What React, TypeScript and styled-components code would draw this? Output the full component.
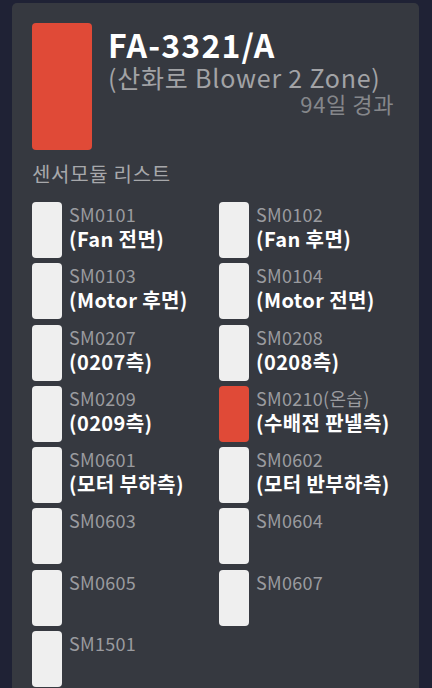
import React from "react";
import styled, { createGlobalStyle } from "styled-components";

const Global = createGlobalStyle`
  html, body {
    margin: 0;
    padding: 0;
    background: #1f2235;
    font-family: "Noto Sans CJK KR", "Noto Sans", sans-serif;
    overflow: hidden;
  }
`;

const Page = styled.div`
  width: 432px;
  height: 688px;
  padding: 3px 13px 0 12px;
  box-sizing: border-box;
  overflow: hidden;
`;

const Card = styled.div`
  background: #363940;
  border-radius: 5px;
  padding: 20px 25px 40px 20px;
  min-height: 720px;
  box-sizing: border-box;
`;

const Header = styled.div`
  display: flex;
  gap: 16px;
`;

const StatusBlock = styled.div<{ $color: string }>`
  width: 60px;
  height: 127px;
  flex: none;
  border-radius: 4px;
  background: ${(p) => p.$color};
`;

const TitleBlock = styled.div`
  flex: 1;
  display: flex;
  flex-direction: column;
`;

const Title = styled.div`
  font-size: 32px;
  line-height: 42px;
  font-weight: 700;
  letter-spacing: 1.2px;
  color: #ffffff;
`;

const Subtitle = styled.div`
  font-size: 25px;
  line-height: 24px;
  letter-spacing: 0.8px;
  color: #a2a3a6;
  white-space: nowrap;
`;

const Elapsed = styled.div`
  font-size: 22px;
  line-height: 28px;
  letter-spacing: 0.6px;
  color: #85878b;
  text-align: right;
`;

const SectionLabel = styled.div`
  margin-top: 11px;
  font-size: 20px;
  line-height: 26px;
  letter-spacing: 0.7px;
  color: #a7a8ab;
`;

const Grid = styled.div`
  margin-top: 15px;
  display: grid;
  grid-template-columns: 187px 1fr;
  row-gap: 5.3px;
`;

const Item = styled.div`
  display: flex;
  gap: 7px;
`;

const Indicator = styled.div<{ $alert?: boolean }>`
  width: 30px;
  height: 56px;
  flex: none;
  border-radius: 4px;
  background: ${(p) => (p.$alert ? "#e04a37" : "#efefef")};
`;

const ItemText = styled.div`
  display: flex;
  flex-direction: column;
`;

const Code = styled.div`
  font-size: 18px;
  line-height: 24px;
  letter-spacing: 0.3px;
  color: #9a9b9f;
  white-space: nowrap;
`;

const Name = styled.div`
  font-size: 20px;
  line-height: 26px;
  font-weight: 700;
  letter-spacing: 0.4px;
  color: #ffffff;
  white-space: nowrap;
`;

type Sensor = { code: string; name?: string; alert?: boolean };

const sensors: Sensor[] = [
  { code: "SM0101", name: "(Fan 전면)" },
  { code: "SM0102", name: "(Fan 후면)" },
  { code: "SM0103", name: "(Motor 후면)" },
  { code: "SM0104", name: "(Motor 전면)" },
  { code: "SM0207", name: "(0207측)" },
  { code: "SM0208", name: "(0208측)" },
  { code: "SM0209", name: "(0209측)" },
  { code: "SM0210(온습)", name: "(수배전 판넬측)", alert: true },
  { code: "SM0601", name: "(모터 부하측)" },
  { code: "SM0602", name: "(모터 반부하측)" },
  { code: "SM0603" },
  { code: "SM0604" },
  { code: "SM0605" },
  { code: "SM0607" },
  { code: "SM1501" },
];

export default function App() {
  return (
    <Page>
      <Global />
      <Card>
        <Header>
          <StatusBlock $color="#e04a37" />
          <TitleBlock>
            <Title>FA-3321/A</Title>
            <Subtitle>(산화로 Blower 2 Zone)</Subtitle>
            <Elapsed>94일 경과</Elapsed>
          </TitleBlock>
        </Header>
        <SectionLabel>센서모듈 리스트</SectionLabel>
        <Grid>
          {sensors.map((s) => (
            <Item key={s.code}>
              <Indicator $alert={s.alert} />
              <ItemText>
                <Code>{s.code}</Code>
                {s.name && <Name>{s.name}</Name>}
              </ItemText>
            </Item>
          ))}
        </Grid>
      </Card>
    </Page>
  );
}
